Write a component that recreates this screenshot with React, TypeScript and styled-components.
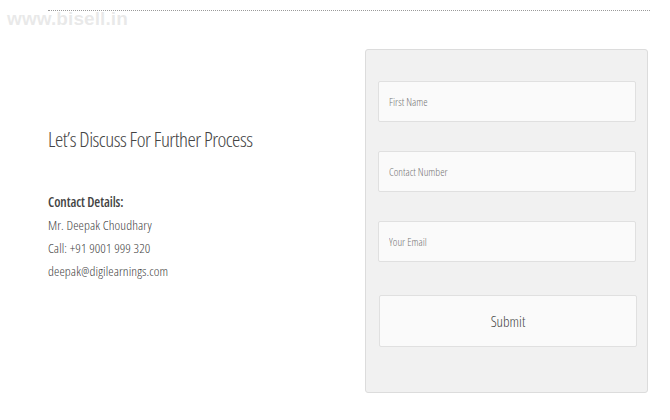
import React from "react";
import styled, { createGlobalStyle } from "styled-components";

const GlobalStyle = createGlobalStyle`
  body {
    margin: 0;
    background: #fff;
    font-family: "Open Sans", "Liberation Sans", sans-serif;
    font-stretch: 75%;
  }
  * { box-sizing: border-box; }
`;

const Page = styled.div`
  position: relative;
  width: 670px;
  height: 420px;
  padding: 10px 0 0 48px;
`;

const Watermark = styled.div`
  position: absolute;
  top: 8px;
  left: 7px;
  font-family: "Liberation Sans", Arial, sans-serif;
  font-stretch: normal;
  font-weight: 700;
  font-size: 19px;
  letter-spacing: 0.1px;
  color: rgba(215, 215, 215, 0.55);
  pointer-events: none;
`;

const Divider = styled.div`
  width: 602px;
  border-top: 1px dotted #9a9a9a;
`;

const Content = styled.div`
  display: flex;
  margin-top: 38px;
`;

const InfoColumn = styled.div`
  flex: 0 0 317px;
  padding-top: 78px;
  color: #555;
`;

const Heading = styled.h2`
  margin: 0;
  font-size: 21px;
  line-height: 25px;
  font-weight: 320;
  letter-spacing: -0.5px;
  color: #444;
`;

const Details = styled.div`
  margin-top: 39px;
  font-size: 13.5px;
  line-height: 23px;
  font-weight: 360;
  letter-spacing: 0.1px;
  color: #444;
`;

const DetailsTitle = styled.div`
  font-weight: 600;
  letter-spacing: -0.1px;
  color: #444;
`;

const FormPanel = styled.form`
  width: 283px;
  height: 344px;
  background: #f1f1f1;
  border: 1px solid #dcdcdc;
  border-radius: 3px;
  padding: 31px 11px 0 12px;
  display: flex;
  flex-direction: column;
  gap: 29px;
`;

const Field = styled.input`
  width: 258px;
  height: 41px;
  background: #fafafa;
  border: 1px solid #e0e0e0;
  border-radius: 2px;
  padding: 0 10px;
  font-family: inherit;
  font-stretch: 75%;
  font-weight: 300;
  font-size: 11px;
  color: #555;
  outline: none;

  &::placeholder {
    color: #777;
  }
`;

const SubmitButton = styled.button`
  width: 258px;
  height: 52px;
  margin: 4px 0 0 1px;
  background: #fafafa;
  border: 1px solid #e0e0e0;
  border-radius: 2px;
  font-family: inherit;
  font-stretch: 75%;
  font-weight: 300;
  font-size: 15px;
  color: #444;
  cursor: pointer;
`;

export default function App() {
  return (
    <Page>
      <GlobalStyle />
      <Watermark>www.bisell.in</Watermark>
      <Divider />
      <Content>
        <InfoColumn>
          <Heading>Let’s Discuss For Further Process</Heading>
          <Details>
            <DetailsTitle>Contact Details:</DetailsTitle>
            <div>Mr. Deepak Choudhary</div>
            <div>Call: +91 9001 999 320</div>
            <div>deepak@digilearnings.com</div>
          </Details>
        </InfoColumn>
        <FormPanel onSubmit={(e) => e.preventDefault()}>
          <Field type="text" placeholder="First Name" />
          <Field type="text" placeholder="Contact Number" />
          <Field type="email" placeholder="Your Email" />
          <SubmitButton type="submit">Submit</SubmitButton>
        </FormPanel>
      </Content>
    </Page>
  );
}
